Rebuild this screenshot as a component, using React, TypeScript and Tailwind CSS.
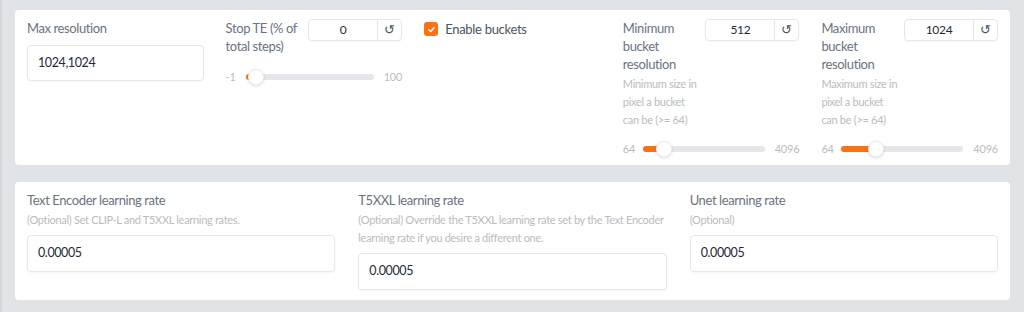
import React from 'react';

const font = { fontFamily: 'Lato, "Liberation Sans", sans-serif' };

function NumberBox({ value }: { value: string }) {
  return (
    <div className="flex h-[22px] w-[94px] shrink-0 rounded-[4px] border border-[#e5e7eb] bg-white shadow-[0_1px_2px_rgba(0,0,0,0.04)]">
      <div className="flex flex-1 items-center justify-center text-[12px] tracking-[-0.3px] text-[#1f2937]">{value}</div>
      <div className="flex w-[24px] items-center justify-center border-l border-[#e5e7eb] text-[13px] text-[#4b5563]">↺</div>
    </div>
  );
}

function Slider({ min, max, value }: { min: number; max: number; value: number }) {
  const pct = (value - min) / (max - min);
  return (
    <div className="flex h-[16px] items-center gap-[10px] text-[11px] tracking-[-0.2px] text-[#b9bcc0]">
      <span className="w-[10px] shrink-0">{min}</span>
      <div className="relative h-[6px] flex-1 rounded-full bg-[#e5e7eb]">
        <div className="absolute left-0 top-0 h-[6px] rounded-full bg-[#f97316]" style={{ width: `calc(${pct} * (100% - 16px) + 8px)` }} />
        <div
          className="absolute top-[-5px] h-[16px] w-[16px] rounded-full border border-[#eceef0] bg-white shadow-[0_1px_3px_rgba(0,0,0,0.15)]"
          style={{ left: `calc(${pct} * (100% - 16px) + 1px)` }}
        />
      </div>
      <span className="shrink-0">{max}</span>
    </div>
  );
}

function TextBox({ value, tall }: { value: string; tall?: boolean }) {
  return (
    <div
      className={`flex items-center rounded-[4px] border border-[#e5e7eb] bg-white px-[10px] text-[12.5px] tracking-[-0.4px] text-[#1f2937] shadow-[0_1px_2px_rgba(0,0,0,0.04)] ${tall ? 'h-[37px]' : 'h-[36px]'}`}
    >
      {value}
    </div>
  );
}

function LearningRate({ label, desc, value }: { label: string; desc: string; value: string }) {
  return (
    <div className="flex flex-col">
      <div className="text-[13px] leading-[18px] tracking-[-0.4px] text-[#6b7280]">{label}</div>
      <div className="mt-[2px] text-[11px] leading-[18px] tracking-[-0.3px] text-[#b9bcc0]">{desc}</div>
      <div className="mt-[6px]">
        <TextBox value={value} tall />
      </div>
    </div>
  );
}

export default function App() {
  return (
    <div className="h-[312px] w-[1024px] border-l-2 border-[#d3d7db] bg-[#e1e4e7] pl-[13px] pr-[14px] pt-[10px]" style={font}>
      <div className="grid grid-cols-5 gap-x-[22px] rounded-[4px] bg-white px-[12px] pb-[8px] pt-[9px]">
        <div className="flex flex-col">
          <div className="text-[13px] leading-[18px] tracking-[-0.4px] text-[#6b7280]">Max resolution</div>
          <div className="mt-[8px]">
            <TextBox value="1024,1024" />
          </div>
        </div>

        <div className="flex flex-col">
          <div className="flex gap-[6px]">
            <div className="flex-1 text-[13px] leading-[18px] tracking-[-0.4px] text-[#6b7280]">Stop TE (% of total steps)</div>
            <NumberBox value="0" />
          </div>
          <div className="mt-[14px]">
            <Slider min={-1} max={100} value={0} />
          </div>
        </div>

        <div className="flex items-start gap-[7px] pt-[3px]">
          <div className="flex h-[14px] w-[14px] items-center justify-center rounded-[3px] bg-[#f97316]">
            <svg width="9" height="9" viewBox="0 0 10 10" fill="none">
              <path d="M2 5.2 L4.2 7.3 L8 2.8" stroke="white" strokeWidth="1.6" strokeLinecap="round" strokeLinejoin="round" />
            </svg>
          </div>
          <span className="text-[13px] leading-[14px] tracking-[-0.3px] text-[#4b5563]">Enable buckets</span>
        </div>

        <div className="flex flex-col">
          <div className="flex gap-[3px]">
            <div className="flex-1">
              <div className="w-[76px] text-[13px] leading-[18px] tracking-[-0.4px] text-[#6b7280]">Minimum bucket resolution</div>
            </div>
            <NumberBox value="512" />
          </div>
          <div className="mt-[2px] w-[78px] text-[11px] leading-[18px] tracking-[-0.3px] text-[#b9bcc0]">Minimum size in pixel a bucket can be (&gt;= 64)</div>
          <div className="mt-[12px]">
            <Slider min={64} max={4096} value={512} />
          </div>
        </div>

        <div className="flex flex-col">
          <div className="flex gap-[3px]">
            <div className="flex-1">
              <div className="w-[76px] text-[13px] leading-[18px] tracking-[-0.4px] text-[#6b7280]">Maximum bucket resolution</div>
            </div>
            <NumberBox value="1024" />
          </div>
          <div className="mt-[2px] w-[78px] text-[11px] leading-[18px] tracking-[-0.3px] text-[#b9bcc0]">Maximum size in pixel a bucket can be (&gt;= 64)</div>
          <div className="mt-[12px]">
            <Slider min={64} max={4096} value={1024} />
          </div>
        </div>
      </div>

      <div className="mt-[17px] grid grid-cols-3 gap-x-[23px] rounded-[4px] bg-white px-[12px] pb-[10px] pt-[9px]">
        <LearningRate label="Text Encoder learning rate" desc="(Optional) Set CLIP-L and T5XXL learning rates." value="0.00005" />
        <LearningRate
          label="T5XXL learning rate"
          desc="(Optional) Override the T5XXL learning rate set by the Text Encoder learning rate if you desire a different one."
          value="0.00005"
        />
        <LearningRate label="Unet learning rate" desc="(Optional)" value="0.00005" />
      </div>
    </div>
  );
}
